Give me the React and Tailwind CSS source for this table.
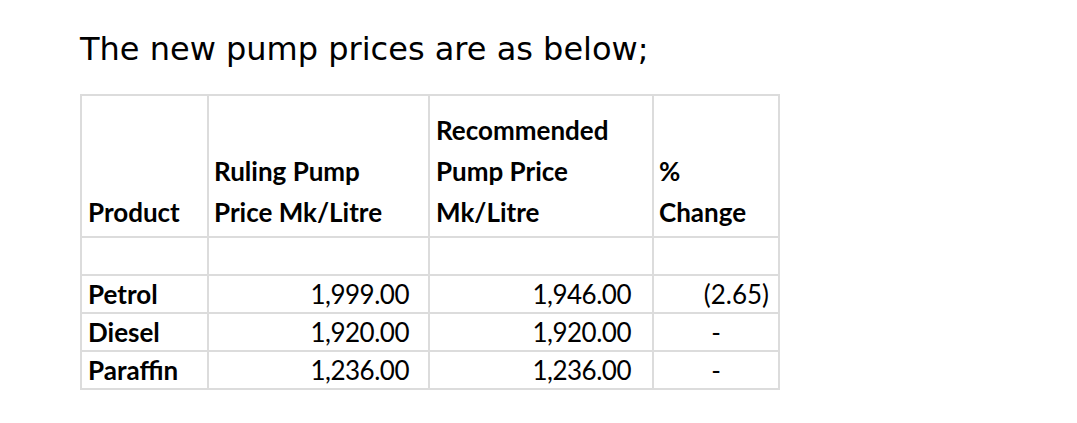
import React from 'react';

const rows = [
  { product: 'Petrol', ruling: '1,999.00', recommended: '1,946.00', change: '(2.65)' },
  { product: 'Diesel', ruling: '1,920.00', recommended: '1,920.00', change: '-' },
  { product: 'Paraffin', ruling: '1,236.00', recommended: '1,236.00', change: '-' },
];

const cell = 'border-2 border-[#dcdcdc] p-0';

const App = () => {
  return (
    <div className="w-[1077px] h-[423px] bg-white pl-[80px] pt-[28px]">
      <h1 className="font-['DejaVu_Sans',sans-serif] text-[32px] leading-[42px] text-black">
        The new pump prices are as below;
      </h1>

      <table className="mt-[24px] border-collapse table-fixed w-[698px] font-['Lato',sans-serif] text-[26px] text-black">
        <colgroup>
          <col className="w-[127px]" />
          <col className="w-[221px]" />
          <col className="w-[224px]" />
          <col className="w-[126px]" />
        </colgroup>
        <thead>
          <tr className="h-[142px] font-bold leading-[41px]">
            <th className={`${cell} align-bottom text-left pl-[6px] pb-[3px] font-bold`}>Product</th>
            <th className={`${cell} align-bottom text-left pl-[5px] pb-[3px] font-bold`}>
              Ruling Pump<br />Price Mk/Litre
            </th>
            <th className={`${cell} align-bottom text-left pl-[6px] pb-[3px] font-bold`}>
              Recommended<br />Pump Price<br />Mk/Litre
            </th>
            <th className={`${cell} align-bottom text-left pl-[5px] pb-[3px] font-bold`}>
              %<br />Change
            </th>
          </tr>
        </thead>
        <tbody>
          <tr className="h-[38px]">
            <td className={cell}></td>
            <td className={cell}></td>
            <td className={cell}></td>
            <td className={cell}></td>
          </tr>
          {rows.map((r) => (
            <tr key={r.product} className="h-[38px] leading-[34px]">
              <td className={`${cell} pl-[6px] font-bold`}>{r.product}</td>
              <td className={`${cell} text-right pr-[19px] tracking-[-0.5px]`}>{r.ruling}</td>
              <td className={`${cell} text-right pr-[21px] tracking-[-0.5px]`}>{r.recommended}</td>
              <td className={`${cell} ${r.change === '-' ? 'text-center' : 'text-right pr-[9px]'}`}>{r.change}</td>
            </tr>
          ))}
        </tbody>
      </table>
    </div>
  );
};

export default App;
